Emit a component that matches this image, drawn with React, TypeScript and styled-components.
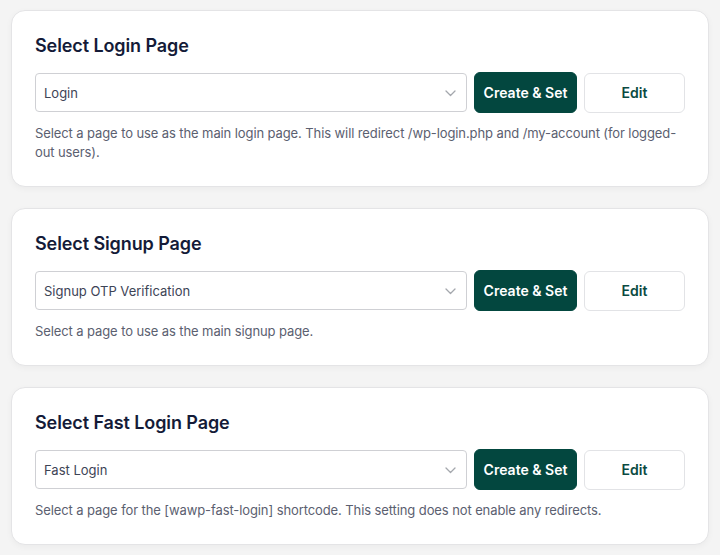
import React from 'react';
import styled, { createGlobalStyle } from 'styled-components';

const GlobalStyle = createGlobalStyle`
  html, body {
    margin: 0;
    padding: 0;
    background: #f4f4f4;
    font-family: Inter, "Noto Sans", "Liberation Sans", sans-serif;
    -webkit-font-smoothing: antialiased;
  }
`;

const Page = styled.div`
  display: flex;
  flex-direction: column;
  gap: 21px;
  padding: 10px 11px;
`;

const Card = styled.section`
  background: #ffffff;
  border: 1px solid #e4e4e6;
  border-radius: 14px;
  box-shadow: 0 2px 6px rgba(0, 0, 0, 0.04);
  padding: 24px 23px;
`;

const Title = styled.h2`
  margin: 0 0 15px;
  font-size: 18px;
  line-height: 22px;
  font-weight: 600;
  color: #141b38;
  letter-spacing: -0.1px;
`;

const Row = styled.div`
  display: flex;
  align-items: center;
  gap: 7px;
  height: 41px;
`;

const SelectBox = styled.div`
  position: relative;
  flex: 1;
  height: 39px;
  box-sizing: border-box;
  border: 1px solid #cfd0d4;
  border-radius: 4px;
  display: flex;
  align-items: center;
  padding: 0 30px 0 8px;
  font-size: 13px;
  color: #3d4456;
  background: #fff;
`;

const Chevron = styled.svg`
  position: absolute;
  right: 10px;
  top: 50%;
  margin-top: -3px;
`;

const Button = styled.button<{ $primary?: boolean }>`
  height: ${p => (p.$primary ? '41px' : '40px')};
  width: ${p => (p.$primary ? '103px' : '101px')};
  box-sizing: border-box;
  border-radius: 6px;
  font-family: inherit;
  font-size: 14px;
  font-weight: 600;
  cursor: pointer;
  background: ${p => (p.$primary ? '#03473f' : '#ffffff')};
  color: ${p => (p.$primary ? '#ffffff' : '#0b4a42')};
  border: 1px solid ${p => (p.$primary ? '#03473f' : '#e2e3e6')};
  padding: 0;
`;

const Hint = styled.p`
  margin: 11px 0 0;
  font-size: 13px;
  line-height: 19px;
  letter-spacing: -0.1px;
  color: #5b6070;
`;

const pages = [
  {
    title: 'Select Login Page',
    value: 'Login',
    hint: 'Select a page to use as the main login page. This will redirect /wp-login.php and /my-account (for logged-out users).',
  },
  {
    title: 'Select Signup Page',
    value: 'Signup OTP Verification',
    hint: 'Select a page to use as the main signup page.',
  },
  {
    title: 'Select Fast Login Page',
    value: 'Fast Login',
    hint: 'Select a page for the [wawp-fast-login] shortcode. This setting does not enable any redirects.',
  },
];

const App: React.FC = () => (
  <>
    <GlobalStyle />
    <Page>
      {pages.map(page => (
        <Card key={page.title}>
          <Title>{page.title}</Title>
          <Row>
            <SelectBox>
              {page.value}
              <Chevron width="11" height="7" viewBox="0 0 11 7" fill="none">
                <path d="M1 1l4.5 4.5L10 1" stroke="#a4a7ad" strokeWidth="1.3" strokeLinecap="round" strokeLinejoin="round" />
              </Chevron>
            </SelectBox>
            <Button $primary>Create &amp; Set</Button>
            <Button>Edit</Button>
          </Row>
          <Hint>{page.hint}</Hint>
        </Card>
      ))}
    </Page>
  </>
);

export default App;
